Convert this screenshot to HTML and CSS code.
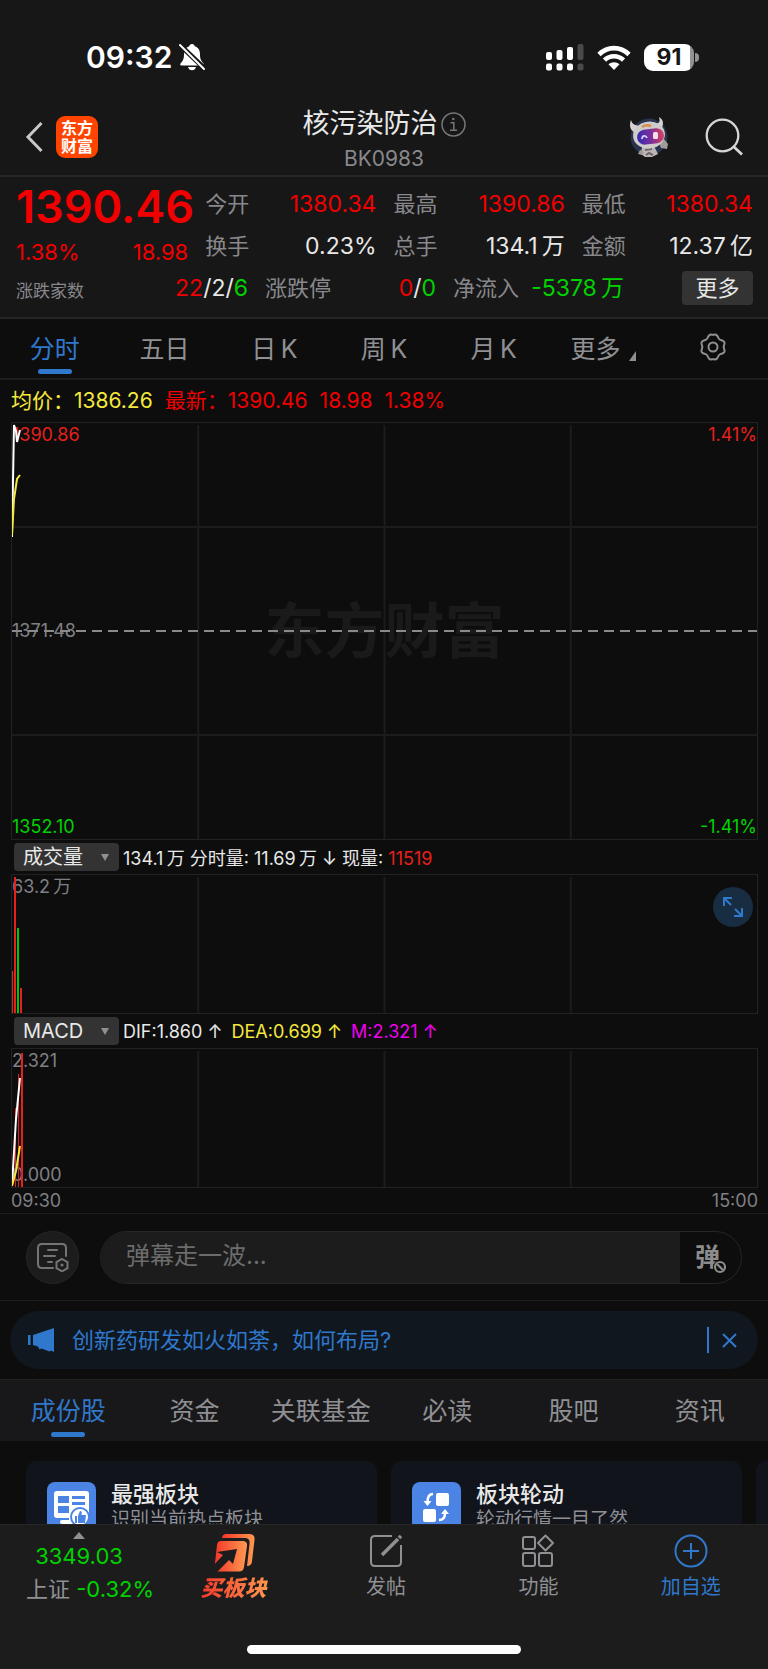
FILE: index.html
```html
<!DOCTYPE html>
<html lang="zh-CN">
<head>
    <meta charset="UTF-8">
    <meta name="viewport" content="width=device-width, initial-scale=1.0">
    <title>核污染防治 BK0983</title>
    <link rel="stylesheet" href="styles.css">
</head>
<body>
    <div class="status-bar">
        <div class="status-left">
            <span class="time">09:32</span>
            <svg width="26" height="28" viewBox="0 0 26 28">
                <path d="M13 1c1.600 0 2.600 1 2.800 2.300 3.600 1.200 5.200 4.200 5.200 8 0 5.500 1.500 7 3.500 9.200.700 1 .200 2-1 2H2.500c-1.200 0-1.700-1-1-2C3.500 18.300 5 16.800 5 11.300c0-3.800 1.600-6.800 5.200-8C10.400 2 11.400 1 13 1zM9 24h8c-.500 2-2 3.300-4 3.300S9.500 26 9 24z" fill="#fff"/>
                <path d="M1 2l25 24" stroke="#171717" stroke-width="5"/>
                <path d="M1 2l24 24" stroke="#fff" stroke-width="2" stroke-linecap="round"/>
            </svg>
        </div>
        <div class="status-right">
            <svg width="38" height="27" viewBox="0 0 38 27" fill="#fff">
                <rect x="0" y="8" width="6" height="8" rx="2"/>
                <rect x="10.500" y="6" width="6" height="10" rx="2"/>
                <rect x="21" y="3" width="6" height="13" rx="2"/>
                <rect x="31.500" y="0" width="6" height="16" rx="2" fill="#4a4a4a"/>
                <rect x="0" y="19.500" width="6" height="7" rx="2"/>
                <rect x="10.500" y="19.500" width="6" height="7" rx="2"/>
                <rect x="21" y="19.500" width="6" height="7" rx="2"/>
                <rect x="31.500" y="19.500" width="6" height="7" rx="2" fill="#4a4a4a"/>
            </svg>
            <svg width="34" height="25" viewBox="0 0 34 25" fill="none" stroke="#fff" stroke-width="4.600">
                <path d="M2 9.500C10.500 1 23.500 1 32 9.500"/>
                <path d="M7.500 15.200c5.300-5.200 13.700-5.200 19 0"/>
                <path d="M11.500 19.300c3-2.800 8-2.800 11 0L17 25z" fill="#fff" stroke="none"/>
            </svg>
            <div class="battery"><span>91</span></div>
        </div>
    </div>

    <header class="header">
        <div class="header-left">
            <button class="icon-btn" aria-label="返回">
                <svg width="18" height="32" viewBox="0 0 18 32" fill="none" stroke="#c8c8c8" stroke-width="3"><path d="M16.500 2L3 16l13.500 14"/></svg>
            </button>
            <div class="logo">东方<br>财富</div>
        </div>
        <div class="header-title">
            <h1>核污染防治<svg width="25" height="25" viewBox="0 0 25 25" fill="none" stroke="#77777a" stroke-width="1.500"><circle cx="12.500" cy="12.500" r="11.500"/><circle cx="12.300" cy="7" r="1.300" fill="#77777a" stroke="none"/><path d="M9.500 10.800h3.300V18M9 18.200h7"/></svg></h1>
            <p>BK0983</p>
        </div>
        <div class="header-right">
            <button class="icon-btn" aria-label="智能助手">
                <svg width="42" height="42" viewBox="0 0 42 42">
                    <defs>
                        <linearGradient id="visor" x1="0" x2="1"><stop offset="0" stop-color="#312db0"/><stop offset=".5" stop-color="#7a2e9c"/><stop offset="1" stop-color="#d9425c"/></linearGradient>
                    </defs>
                    <circle cx="21" cy="21" r="18.500" fill="#29334d"/>
                    <path d="M14 31l12-1 4 8-6 3h-7l-4-3z" fill="#bdb5b5"/>
                    <path d="M12 34l4 2-2 3-4-1zM31 27l5-4 4 5-1 5-6-1z" fill="#a39b9b"/>
                    <path d="M17 34l7-1M18 39l3-2 4 2" stroke="#6e6668" stroke-width="2" fill="none"/>
                    <path d="M6 16C2 14 1 9 3 4c1 4 4 5 8 6zM29 7c3 0 3-2 2-6 5 3 5 8 2 12z" fill="#d6d2d1"/>
                    <ellipse cx="21" cy="19" rx="16" ry="13.500" fill="#cfcbca" transform="rotate(-8 21 19)"/>
                    <path d="M14 11c3-2 6-2 9-1" stroke="#d98a4b" stroke-width="2.500" fill="none"/>
                    <rect x="9" y="13" width="27" height="15" rx="7.500" fill="url(#visor)" transform="rotate(-7 22 20)"/>
                    <path d="M14 23c0-4 4-4 5-1" stroke="#d8c9ff" stroke-width="1.800" fill="none"/>
                    <rect x="25" y="16" width="5" height="7" rx="1.500" fill="#f6dfec"/>
                </svg>
            </button>
            <button class="icon-btn" aria-label="搜索">
                <svg width="38" height="38" viewBox="0 0 38 38" fill="none" stroke="#d5d5d5" stroke-width="2.300"><circle cx="17.500" cy="17.500" r="15.800"/><path d="M28 28l9 8.500" stroke-width="2.800"/></svg>
            </button>
        </div>
    </header>

    <main class="content">
        <section class="quote">
            <div class="quote-main">
                <div class="price-box">
                    <div class="price">1390.46</div>
                    <div class="price-change"><span>1.38%</span><span>18.98</span></div>
                </div>
                <dl class="quote-grid">
                    <div><dt>今开</dt><dd class="red">1380.34</dd></div>
                    <div><dt>最高</dt><dd class="red">1390.86</dd></div>
                    <div><dt>最低</dt><dd class="red">1380.34</dd></div>
                    <div><dt>换手</dt><dd>0.23%</dd></div>
                    <div><dt>总手</dt><dd>134.1&thinsp;万</dd></div>
                    <div><dt>金额</dt><dd>12.37&thinsp;亿</dd></div>
                </dl>
            </div>
            <dl class="quote-extra">
                <div><dt class="small">涨跌家数</dt><dd><span class="red">22</span>/2/<span class="green">6</span></dd></div>
                <div><dt>涨跌停</dt><dd><span class="red">0</span>/<span class="green">0</span></dd></div>
                <div><dt>净流入</dt><dd class="green">-5378&thinsp;万</dd></div>
                <div class="more-cell"><button class="more-btn">更多</button></div>
            </dl>
        </section>

        <nav class="tabs period-tabs">
            <button class="tab active">分时</button>
            <button class="tab">五日</button>
            <button class="tab">日&thinsp;K</button>
            <button class="tab">周&thinsp;K</button>
            <button class="tab">月&thinsp;K</button>
            <button class="tab">更多<svg class="corner" width="7" height="10" viewBox="0 0 7 10"><path d="M7 0v10H0z" fill="#909094"/></svg></button>
            <button class="tab" aria-label="设置">
                <svg width="30" height="28" viewBox="0 0 30 28" fill="none" stroke="#909094" stroke-width="2"><path d="M11 2.500c1.500-1.700 2.600-.700 4-.700s2.500-1 4 .700c1.500 1.500 1 3 2.700 4s3.500.500 4.600 2.500c1 2-.600 3-.600 5s1.600 3 .600 5c-1.100 2-2.900 1.500-4.600 2.500s-1.200 2.500-2.700 4c-1.500 1.700-2.600.700-4 .700s-2.500 1-4-.700c-1.500-1.500-1-3-2.700-4s-3.500-.500-4.600-2.500c-1-2 .600-3 .600-5s-1.600-3-.600-5c1.100-2 2.900-1.500 4.600-2.500s1.200-2.500 2.700-4z"/><circle cx="15" cy="14" r="4.500"/></svg>
            </button>
        </nav>

        <section class="charts">
            <div class="legend">
                <span class="yellow">均价：1386.26</span>
                <span class="red">最新：1390.46</span>
                <span class="red">18.98</span>
                <span class="red">1.38%</span>
            </div>

            <div class="chart chart-price">
                <div class="watermark">东方财富</div>
                <div class="axis"><span class="red-soft">1390.86</span><span class="red-soft">1.41%</span></div>
                <div class="axis gray"><span>1371.48</span></div>
                <div class="axis green"><span>1352.10</span><span>-1.41%</span></div>
                <svg class="plot">
                    <g stroke="#1c1c1c" stroke-width="2">
                        <line x1="25%" y1="2" x2="25%" y2="100%"/>
                        <line x1="50%" y1="2" x2="50%" y2="100%"/>
                        <line x1="75%" y1="2" x2="75%" y2="100%"/>
                        <line x1="0" y1="25%" x2="100%" y2="25%"/>
                        <line x1="0" y1="75%" x2="100%" y2="75%"/>
                    </g>
                    <line x1="0" y1="50%" x2="100%" y2="50%" stroke="#8a8a8a" stroke-width="2" stroke-dasharray="10 6"/>
                    <polyline points="0,114 2,2 4,8 5,19 8,7" fill="none" stroke="#fff" stroke-width="2"/>
                    <polyline points="0,112 2,76 5,56 8,52" fill="none" stroke="#f5e83c" stroke-width="2"/>
                </svg>
            </div>

            <div class="indicator">
                <div class="picker">
                    <select aria-label="指标一"><option>成交量</option><option>成交额</option></select>
                    <svg width="8" height="7" viewBox="0 0 8 7"><path d="M0 0h8L4 7z" fill="#909094"/></svg>
                </div>
                <p>134.1&thinsp;万 分时量: 11.69&thinsp;万 ↓ 现量: <span class="red-soft">11519</span></p>
            </div>
            <div class="chart chart-sub">
                <div class="axis gray"><span>63.2&thinsp;万</span></div>
                <svg class="plot">
                    <g stroke="#1c1c1c" stroke-width="2">
                        <line x1="25%" y1="2" x2="25%" y2="100%"/>
                        <line x1="50%" y1="2" x2="50%" y2="100%"/>
                        <line x1="75%" y1="2" x2="75%" y2="100%"/>
                    </g>
                    <g fill="#e6201c">
                        <rect x="0" y="96" width="1" height="42"/>
                        <rect x="2" y="2" width="2" height="136"/>
                        <rect x="8" y="113" width="2" height="25"/>
                    </g>
                    <rect x="5" y="53" width="2" height="85" fill="#00c800"/>
                </svg>
                <button class="expand" aria-label="全屏">
                    <svg width="20" height="20" viewBox="0 0 20 20" fill="none" stroke="#2f78cc" stroke-width="2"><path d="M1 9V1h8M1 1l7 7M19 11v8h-8M19 19l-7-7"/></svg>
                </button>
            </div>

            <div class="indicator">
                <div class="picker">
                    <select aria-label="指标二"><option>MACD</option><option>KDJ</option></select>
                    <svg width="8" height="7" viewBox="0 0 8 7"><path d="M0 0h8L4 7z" fill="#909094"/></svg>
                </div>
                <p>DIF:1.860 ↑</p>
                <p class="yellow">DEA:0.699 ↑</p>
                <p class="magenta">M:2.321 ↑</p>
            </div>
            <div class="chart chart-sub">
                <div class="axis gray"><span>2.321</span></div>
                <div class="axis gray"><span>0.000</span></div>
                <svg class="plot">
                    <g stroke="#1c1c1c" stroke-width="2">
                        <line x1="25%" y1="2" x2="25%" y2="100%"/>
                        <line x1="50%" y1="2" x2="50%" y2="100%"/>
                        <line x1="75%" y1="2" x2="75%" y2="100%"/>
                    </g>
                    <g fill="#e6201c">
                        <rect x="3" y="59" width="1" height="79"/>
                        <rect x="6" y="25" width="1" height="113"/>
                        <rect x="9" y="4" width="2" height="134"/>
                    </g>
                    <polyline points="0,136 4,70 8,29" fill="none" stroke="#fff" stroke-width="2"/>
                    <polyline points="0,137 4,122 8,97" fill="none" stroke="#f5e83c" stroke-width="2"/>
                </svg>
            </div>
            <div class="time-axis"><span>09:30</span><span>15:00</span></div>
        </section>

        <section class="danmu">
            <button class="danmu-list" aria-label="弹幕列表">
                <svg width="34" height="30" viewBox="0 0 34 30" fill="none" stroke="#747474" stroke-width="2"><path d="M17 26H6c-3 0-4-1-4-4V6c0-3 1-4 4-4h20c3 0 4 1 4 4v8M12 8h9M8 14h11M12 20h4" stroke-linecap="round"/><path d="M26 17l5.500 3.200v6L26 29.400l-5.500-3.200v-6z"/><circle cx="26" cy="23" r="1.600" fill="#747474" stroke="none"/></svg>
            </button>
            <div class="danmu-box">
                <input type="text" placeholder="弹幕走一波..." aria-label="弹幕">
                <button class="danmu-off">弹<svg width="14" height="14" viewBox="0 0 14 14" stroke="#8c8c8c" stroke-width="2.200"><circle cx="7" cy="7" r="7" fill="#0d0d0d" stroke="none"/><circle cx="7" cy="7" r="5" fill="none"/><path d="M4 4l6 6"/></svg></button>
            </div>
        </section>

        <section class="notice">
            <svg width="28" height="24" viewBox="0 0 28 24" fill="#2f78cc"><path d="M0 7h2.500v10H0zM5 7L26 0v24l-3-1.500-1.500 1-8-3-2 1L10 18.500 5 17z"/></svg>
            <a href="#">创新药研发如火如荼，如何布局?</a>
            <button class="icon-btn close" aria-label="关闭">
                <svg width="15" height="15" viewBox="0 0 15 15" stroke="#2f78cc" stroke-width="2"><path d="M1 1l13 13M14 1L1 14"/></svg>
            </button>
        </section>

        <nav class="tabs info-tabs">
            <button class="tab active">成份股</button>
            <button class="tab">资金</button>
            <button class="tab">关联基金</button>
            <button class="tab">必读</button>
            <button class="tab">股吧</button>
            <button class="tab">资讯</button>
        </nav>

        <section class="cards">
            <a class="card" href="#">
                <svg width="49" height="49" viewBox="0 0 49 49">
                    <rect width="49" height="49" rx="8" fill="#4b84e4"/>
                    <path d="M10 9h29a3 3 0 0 1 3 3v21a3 3 0 0 1-3 3H28v3h-6v-3H10a3 3 0 0 1-3-3V12a3 3 0 0 1 3-3z" fill="#fff"/>
                    <path d="M11 14h11v7H11zM25 14h13v3H25zM11 24h11v7H11zM25 20h13v3H25z" fill="#4b84e4"/>
                    <path d="M15 40h14" stroke="#fff" stroke-width="4" stroke-linecap="round"/>
                    <circle cx="33" cy="35" r="9" fill="#fff" stroke="#4b84e4" stroke-width="2"/>
                    <path d="M28 34h2v7h-2zM31 34l2-5c2 0 2 1 1.500 4H39l-1 8h-7z" fill="#4b84e4"/>
                </svg>
                <div><h3>最强板块</h3><p>识别当前热点板块</p></div>
            </a>
            <a class="card" href="#">
                <svg width="49" height="49" viewBox="0 0 49 49">
                    <rect width="49" height="49" rx="8" fill="#4b84e4"/>
                    <rect x="24" y="11" width="13" height="13" rx="2" fill="#fff"/>
                    <rect x="11" y="27" width="13" height="13" rx="2" fill="#fff"/>
                    <path d="M21 12c-4 0-5.500 3-5.500 8M27 38c4 0 6-3 6-7" fill="none" stroke="#fff" stroke-width="2.500"/>
                    <path d="M11.500 19h8l-4 5zM29 32h8l-4-5z" fill="#fff"/>
                </svg>
                <div><h3>板块轮动</h3><p>轮动行情一目了然</p></div>
            </a>
            <a class="card" href="#" aria-label="更多板块"></a>
        </section>
    </main>

    <footer class="bottom">
        <nav class="bottom-nav">
            <a class="index" href="#">
                <svg width="12" height="7" viewBox="0 0 12 7"><path d="M6 0l6 7H0z" fill="#909094"/></svg>
                <span class="green">3349.03</span>
                <span class="index-name">上证 <span class="green">-0.32%</span></span>
            </a>
            <a class="buy" href="#">
                <svg width="42" height="38" viewBox="0 0 42 38">
                    <defs><linearGradient id="hot" x1="0" x2="1"><stop offset="0" stop-color="#f4352a"/><stop offset="1" stop-color="#ff9a50"/></linearGradient></defs>
                    <path d="M13 0h23c4 0 6 2 5.500 6L39 27c0 3-2 5-5 5L36.500 10c.500-4-1-6-5-6H9c.500-3 1.500-4 4-4z" fill="url(#hot)"/>
                    <path d="M8 7h21c4 0 5.500 1.500 5 5l-3 21c-.500 3-2 4.500-5 4.500H4c-2 0-3-1.500-2.500-4L4 11c.500-3 1.500-4 4-4z" fill="url(#hot)"/>
                    <path d="M4 18l20-3-4 15-4-4L4 38H0v-6l10-11z" fill="#1c1c1c"/>
                </svg>
                <span>买板块</span>
            </a>
            <a href="#">
                <svg width="34" height="34" viewBox="0 0 34 34" fill="none" stroke="#909094" stroke-width="2"><path d="M23 2H6C3 2 2 3 2 6v22c0 3 1 4 4 4h22c3 0 4-1 4-4V11"/><path d="M13 21L29 5" stroke-width="3.500"/><path d="M30 4l2-2" stroke-width="3.500"/></svg>
                <span>发帖</span>
            </a>
            <a href="#">
                <svg width="34" height="34" viewBox="0 0 34 34" fill="none" stroke="#909094" stroke-width="2"><rect x="2" y="3" width="12" height="12" rx="2"/><rect x="2" y="19" width="12" height="13" rx="2"/><rect x="18" y="19" width="13" height="13" rx="2"/><path d="M24.500 1.500L32 9l-7.500 7.500L17 9z" stroke-linejoin="round"/></svg>
                <span>功能</span>
            </a>
            <a class="add" href="#">
                <svg width="34" height="34" viewBox="0 0 34 34" fill="none" stroke="#2f78cc" stroke-width="2"><circle cx="17" cy="17" r="15.500"/><path d="M17 9v16M9 17h16"/></svg>
                <span>加自选</span>
            </a>
        </nav>
        <div class="home-bar"></div>
    </footer>
</body>
</html>
```

FILE: styles.css
```css
* {
    box-sizing: border-box;
}
body {
    margin: 0;
    height: 100vh;
    display: flex;
    flex-direction: column;
    font-family: Inter, "Noto Sans CJK SC", sans-serif;
    font-size: 22px;
    color: #e8e8e8;
    background-color: #0d0d0d;
}
h1, h3, p, dl, dd {
    margin: 0;
    font-weight: 400;
}
button, select, input {
    font: inherit;
    color: inherit;
    background: none;
    border: none;
    padding: 0;
    margin: 0;
}
button {
    cursor: pointer;
}
a {
    color: inherit;
    text-decoration: none;
}
svg {
    display: block;
    flex-shrink: 0;
}
.icon-btn {
    display: flex;
}
.red {
    color: #f00000;
}
.red-soft {
    color: #e6201c;
}
.green {
    color: #00d200;
}
.yellow {
    color: #f5e83c;
}
.magenta {
    color: #f000f0;
}
.gray {
    color: #808084;
}

/* status bar */
.status-bar {
    display: flex;
    justify-content: space-between;
    align-items: center;
    height: 98px;
    padding: 16px 69px 0 86px;
    background-color: #171717;
}
.status-left, .status-right {
    display: flex;
    align-items: center;
}
.status-left {
    gap: 7px;
}
.status-right {
    gap: 13px;
}
.time {
    font-size: 30px;
    font-weight: 600;
    line-height: 40px;
    color: #fff;
}
.battery {
    position: relative;
    width: 50px;
    height: 27px;
    border-radius: 9px;
    background: linear-gradient(to right, #fff 91%, #929292 91%);
    color: #171717;
    font-size: 23px;
    font-weight: 700;
    line-height: 27px;
    text-align: center;
    margin-right: 5px;
}
.battery::after {
    content: "";
    position: absolute;
    left: 51px;
    top: 9px;
    width: 4px;
    height: 9px;
    border-radius: 0 4px 4px 0;
    background-color: #929292;
}

/* header */
.header {
    display: grid;
    grid-template-columns: 1fr auto 1fr;
    align-items: center;
    height: 79px;
    padding: 0 25px;
    background-color: #171717;
    border-bottom: 2px solid #262626;
}
.header-left {
    display: flex;
    align-items: center;
    gap: 13px;
}
.logo {
    width: 42px;
    height: 42px;
    padding-top: 3px;
    border-radius: 9px;
    background-color: #ff4400;
    color: #fff;
    font-size: 16px;
    font-weight: 700;
    line-height: 18px;
    text-align: center;
}
.header-title {
    padding-top: 8px;
    text-align: center;
}
.header-title h1 {
    display: flex;
    align-items: center;
    gap: 3px;
    font-size: 27px;
    line-height: 36px;
}
.header-title p {
    font-size: 21px;
    line-height: 34px;
    color: #88888c;
}
.header-right {
    display: flex;
    align-items: center;
    justify-content: flex-end;
    gap: 35px;
}

/* quote */
.content {
    flex: 1;
    min-height: 0;
    overflow: hidden auto;
    scrollbar-width: none;
}
.quote {
    padding: 6px 15px 8px 16px;
    background-color: #171717;
    border-bottom: 2px solid #262626;
}
.quote-main {
    display: grid;
    grid-template-columns: minmax(0, 172fr) minmax(0, 547fr);
    grid-template-rows: 84px;
    column-gap: 17px;
}
.price {
    font-size: 45px;
    font-weight: 600;
    line-height: 48px;
    color: #f00000;
}
.price-change {
    display: flex;
    justify-content: space-between;
    line-height: 42px;
    color: #f00000;
}
.quote-grid {
    display: grid;
    grid-template-columns: repeat(3, 1fr);
    column-gap: 17px;
}
.quote-extra {
    display: grid;
    grid-template-columns: 232fr 171fr 171fr 112fr;
    column-gap: 17px;
}
.quote-grid div, .quote-extra div {
    display: flex;
    justify-content: space-between;
    align-items: center;
    height: 42px;
    line-height: 42px;
    white-space: nowrap;
}
.quote dt {
    color: #88888c;
}
.quote dt.small {
    padding-top: 5px;
    font-size: 17px;
}
.quote dd {
    font-size: 23px;
}
.quote-extra .more-cell {
    justify-content: flex-end;
}
.more-btn {
    width: 71px;
    height: 34px;
    border-radius: 4px;
    background-color: #333;
    line-height: 34px;
}

/* tabs */
.tabs {
    display: flex;
}
.tab {
    position: relative;
    flex: 1;
    display: flex;
    justify-content: center;
    align-items: center;
    padding-bottom: 3px;
    font-size: 25px;
    color: #909094;
    white-space: nowrap;
}
.tab.active {
    color: #2f78cc;
}
.tab.active::after {
    content: "";
    position: absolute;
    bottom: 4px;
    left: calc(50% - 17px);
    width: 34px;
    height: 5px;
    border-radius: 3px;
    background-color: #2f78cc;
}
.period-tabs {
    height: 61px;
    border-bottom: 2px solid #1e1e1e;
}
.corner {
    align-self: flex-end;
    margin: 0 0 14px 9px;
}
.info-tabs {
    height: 62px;
    padding: 0 5px;
    background-color: #18181a;
    border-top: 1px solid #222;
}

/* charts */
.charts {
    padding: 0 10px 0 11px;
    border-bottom: 1px solid #1e1e1e;
}
.legend {
    display: flex;
    gap: 12px;
    height: 42px;
    font-size: 21px;
    line-height: 42px;
}
.chart {
    position: relative;
    display: flex;
    flex-direction: column;
    justify-content: space-between;
    border: 1px solid #222;
    font-size: 18px;
    line-height: 24px;
}
.chart-price {
    height: 418px;
}
.chart-sub {
    height: 140px;
}
.plot {
    position: absolute;
    inset: 0;
    width: 100%;
    height: 100%;
}
.axis {
    display: flex;
    justify-content: space-between;
}
.watermark {
    position: absolute;
    inset: 0;
    display: flex;
    justify-content: center;
    align-items: center;
    font-size: 60px;
    font-weight: 700;
    color: #1a1a1a;
}
.indicator {
    display: flex;
    align-items: center;
    gap: 9px;
    height: 34px;
    padding-left: 3px;
    font-size: 18px;
    white-space: nowrap;
}
.picker {
    display: flex;
    align-items: center;
    width: 105px;
    height: 28px;
    padding: 0 10px 0 9px;
    border-radius: 4px;
    background-color: #333;
    margin-right: -5px;
}
.picker select {
    flex: 1;
    min-width: 0;
    appearance: none;
    font-size: 20px;
    line-height: 28px;
}
.expand {
    position: absolute;
    top: 12px;
    right: 4px;
    display: flex;
    justify-content: center;
    align-items: center;
    width: 40px;
    height: 40px;
    border-radius: 50%;
    background-color: #182c42;
}
.time-axis {
    display: flex;
    justify-content: space-between;
    font-size: 18px;
    line-height: 25px;
    color: #808084;
}

/* danmu */
.danmu {
    display: flex;
    align-items: center;
    gap: 21px;
    height: 87px;
    padding: 0 26px;
    border-bottom: 1px solid #1e1e1e;
}
.danmu-list {
    display: flex;
    justify-content: center;
    align-items: center;
    width: 53px;
    height: 53px;
    border-radius: 50%;
    border: 1px solid #262626;
    background-color: #1c1c1c;
}
.danmu-box {
    flex: 1;
    display: flex;
    height: 53px;
    border: 1px solid #262626;
    border-radius: 27px;
    overflow: hidden;
}
.danmu-box input {
    flex: 1;
    min-width: 0;
    padding: 0 25px 4px;
    background-color: #1c1c1c;
    font-size: 24px;
}
.danmu-box input::placeholder {
    color: #6c6c6c;
}
.danmu-off {
    position: relative;
    width: 61px;
    padding: 0 6px 4px 0;
    font-size: 25px;
    font-weight: 700;
    color: #8c8c8c;
}
.danmu-off svg {
    position: absolute;
    right: 14px;
    bottom: 9px;
}

/* notice */
.notice {
    display: flex;
    align-items: center;
    height: 58px;
    margin: 10px;
    padding: 0 21px 0 18px;
    border-radius: 29px;
    background-color: #10171f;
    color: #2f78cc;
}
.notice a {
    flex: 1;
    padding: 0 0 4px 16px;
}
.notice .close {
    align-items: center;
    height: 26px;
    padding-left: 13px;
    border-left: 2px solid #2f78cc;
}

/* cards */
.cards {
    display: flex;
    gap: 14px;
    padding: 20px 0 20px 26px;
    overflow: hidden;
}
.card {
    flex: 0 0 calc(50% - 20px);
    display: flex;
    gap: 15px;
    height: 100px;
    padding: 21px;
    border-radius: 10px;
    background-color: #11141b;
}
.card h3 {
    font-size: 22px;
    font-weight: 500;
    line-height: 24px;
}
.card p {
    padding-top: 2px;
    font-size: 19px;
    line-height: 24px;
    color: #909094;
}

/* bottom */
.bottom {
    display: flex;
    flex-direction: column;
    align-items: center;
    height: 145px;
    background-color: #1c1c1c;
    border-top: 1px solid #262626;
}
.bottom-nav {
    display: grid;
    grid-template-columns: repeat(5, minmax(0, 1fr));
    width: 100%;
    height: 120px;
    padding: 0 1px 0 5px;
}
.bottom-nav a {
    display: flex;
    flex-direction: column;
    align-items: center;
    gap: 3px;
    padding-top: 9px;
    font-size: 20px;
    line-height: 32px;
    color: #909094;
    white-space: nowrap;
}
.bottom-nav .index {
    align-items: flex-start;
    gap: 1px;
    padding: 7px 0 0 21px;
    font-size: 22px;
}
.index > svg, .index > .green {
    width: 106px;
    text-align: center;
}
.bottom-nav .buy {
    gap: 0;
}
.buy span {
    padding: 0 3px;
    font-size: 22px;
    font-weight: 900;
    font-style: italic;
    color: transparent;
    background: linear-gradient(to right, #f4352a, #ff9a50);
    background-clip: text;
}
.bottom-nav .add {
    color: #2f78cc;
}
.home-bar {
    width: 274px;
    height: 9px;
    border-radius: 5px;
    background-color: #fff;
}
```
